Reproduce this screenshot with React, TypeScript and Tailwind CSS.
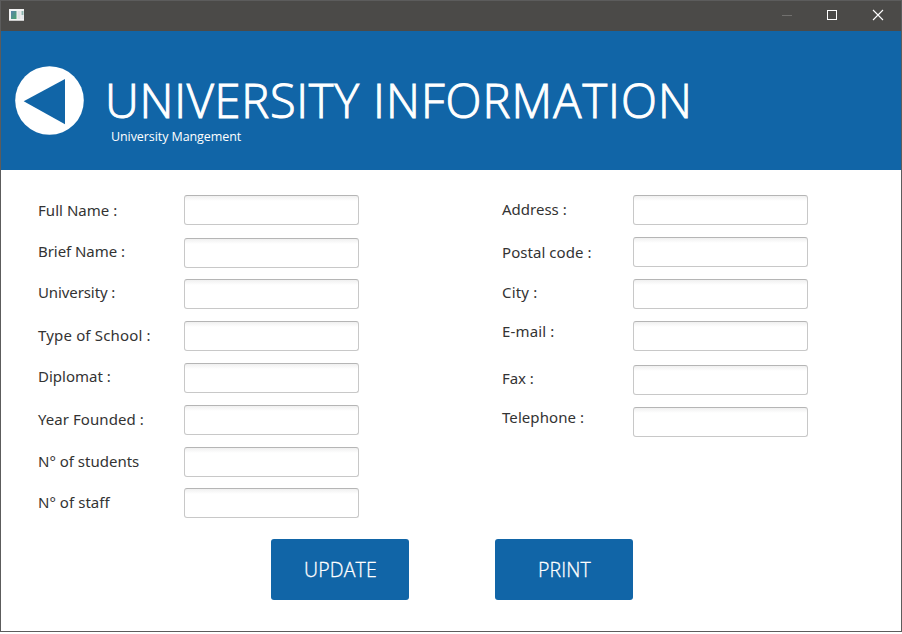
type Row = { label: string; row: string; text: string };

const leftRows: Row[] = [
  { label: "Full Name :", row: "mt-0", text: "mt-[5px] tracking-[0.04px]" },
  { label: "Brief Name :", row: "mt-[13px]", text: "mt-[3px] -tracking-[0.06px]" },
  { label: "University :", row: "mt-[11px]", text: "mt-[3px] -tracking-[0.1px]" },
  { label: "Type of School :", row: "mt-[12px]", text: "mt-[4px] tracking-[0.17px]" },
  { label: "Diplomat :", row: "mt-[12px]", text: "mt-[3px]" },
  { label: "Year Founded :", row: "mt-[12px]", text: "mt-[4px] tracking-[0.06px]" },
  { label: "N° of students", row: "mt-[12px]", text: "mt-[4px]" },
  { label: "N° of staff", row: "mt-[11px]", text: "mt-[4px] tracking-[0.05px]" },
];

const rightRows: Row[] = [
  { label: "Address :", row: "mt-0", text: "mt-[4px]" },
  { label: "Postal code :", row: "mt-[12px]", text: "mt-[5px] tracking-[0.06px]" },
  { label: "City :", row: "mt-[12px]", text: "mt-[3px] tracking-[0.2px]" },
  { label: "E-mail :", row: "mt-[12px]", text: "mt-0 tracking-[0.15px]" },
  { label: "Fax :", row: "mt-[14px]", text: "mt-[3px] -tracking-[0.05px]" },
  { label: "Telephone :", row: "mt-[12px]", text: "mt-0 tracking-[0.07px]" },
];

function Field({ item, labelWidth }: { item: Row; labelWidth: string }) {
  return (
    <label className={`flex h-[30px] items-start ${item.row}`}>
      <span className={`${labelWidth} shrink-0 font-['Noto_Sans','Open_Sans',sans-serif] text-[15px] leading-5 whitespace-nowrap text-[#333333] ${item.text}`}>
        {item.label}
      </span>
      <input
        type="text"
        className="h-[30px] w-[175px] rounded-[3px] border border-[#c8c8c8] border-t-[#b5b5b5] bg-linear-to-b from-[#f0f0f0] to-white to-[5px] px-2 text-[15px] outline-none"
      />
    </label>
  );
}

function ActionButton({ children }: { children: string }) {
  return (
    <button className="h-[61px] w-[138px] rounded-[3px] bg-[#1165a7] pl-px text-[19.5px] leading-[60px] font-light tracking-[0.15px] text-white [-webkit-text-stroke:0.3px_white]">
      {children}
    </button>
  );
}

function TitleBar() {
  return (
    <div className="flex h-[30px] items-start justify-between bg-[#4b4a48]">
      <svg className="mt-[7px] ml-[8px]" width="16" height="14" viewBox="0 0 16 14">
        <defs>
          <linearGradient id="pane" x1="0" y1="0" x2="1" y2="1">
            <stop offset="0" stopColor="#5a83ac" />
            <stop offset="1" stopColor="#4ca36d" />
          </linearGradient>
        </defs>
        <rect x="0" y="1" width="15" height="12" fill="#f3f3f3" />
        <rect x="2" y="3" width="5.5" height="8" fill="url(#pane)" />
        <rect x="8.5" y="3" width="3" height="8" fill="#dfe1e4" />
        <rect x="12.5" y="3" width="2" height="4" fill="#8db5b0" />
        <rect x="12.5" y="7" width="2" height="4" fill="#e4e6ea" />
        <rect x="0" y="12" width="15" height="1" fill="#c9c9c9" />
      </svg>
      <svg width="139" height="30" viewBox="0 0 139 30" fill="none" shapeRendering="crispEdges">
        <path d="M20 14.5h10" stroke="#71706e" />
        <rect x="65.5" y="9.5" width="9" height="9" stroke="#ffffff" />
        <path d="M111 9l10 10M121 9l-10 10" stroke="#ffffff" strokeWidth="1.1" shapeRendering="geometricPrecision" />
      </svg>
    </div>
  );
}

export default function App() {
  return (
    <div className="h-[634px] w-[902px] overflow-hidden bg-white font-['Open_Sans','Noto_Sans',sans-serif]">
      <div className="flex h-[632px] w-full flex-col border border-[#5c5c5c] bg-white">
        <TitleBar />
        <header className="flex h-[139px] shrink-0 items-start bg-[#1165a7] text-white">
          <svg className="mt-[35px] ml-[14px] shrink-0" width="69" height="69" viewBox="0 0 69 69">
            <circle cx="34.5" cy="34.5" r="34.3" fill="#ffffff" />
            <path d="M8.7 35.3L50 13v45.2z" fill="#1165a7" />
          </svg>
          <div className="mt-[41px] ml-[21px] whitespace-nowrap">
            <h1 className="text-[47px] leading-[56px] font-light tracking-[1.05px] [-webkit-text-stroke:1px_white]">
              <span className="tracking-[0.73px]">UNIVERSITY</span> INFORMATION
            </h1>
            <p className="ml-[6px] text-[12.5px] leading-[18px] -tracking-[0.08px]">University Mangement</p>
          </div>
        </header>
        <main className="flex flex-col">
          <div className="flex h-[369px] pt-[25px] pl-[37px]">
            <div className="w-[464px]">
              {leftRows.map((r) => (
                <Field key={r.label} item={r} labelWidth="w-[146px]" />
              ))}
            </div>
            <div>
              {rightRows.map((r) => (
                <Field key={r.label} item={r} labelWidth="w-[131px]" />
              ))}
            </div>
          </div>
          <div className="flex gap-[86px] pl-[270px]">
            <ActionButton>UPDATE</ActionButton>
            <ActionButton>PRINT</ActionButton>
          </div>
        </main>
      </div>
    </div>
  );
}
